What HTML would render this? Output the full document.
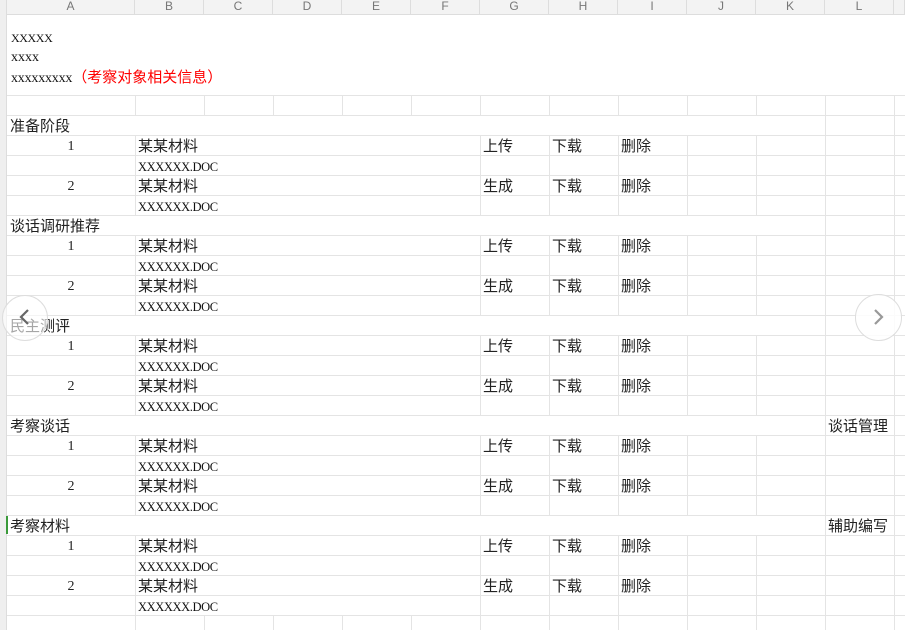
<!DOCTYPE html>
<html><head><meta charset="utf-8"><style>
*{margin:0;padding:0;box-sizing:border-box}
body{width:923px;height:630px;overflow:hidden;background:#fff;position:relative;font-family:"Liberation Sans","Noto Sans CJK SC",sans-serif;color:#222}
.a{position:absolute}
.hl{position:absolute;left:7px;width:898px;height:1px;background:#e4e4e4}
.vl{position:absolute;width:1px;background:#e4e4e4}
.hdr{position:absolute;top:0;height:15px;font-size:12px;color:#777;text-align:center;line-height:13px;border-right:1px solid #ddd}
.t{position:absolute;font-size:15px;line-height:20px;margin-top:1px;white-space:nowrap;font-family:"Noto Sans CJK SC",sans-serif;color:#222}
.s{position:absolute;font-size:12.5px;line-height:20px;margin-top:1px;white-space:nowrap;font-family:"Liberation Serif","Noto Serif CJK SC",serif;color:#111;letter-spacing:-0.4px}
.n{position:absolute;left:7px;width:128px;margin-top:2px;text-align:center;font-size:14px;line-height:20px;font-family:"Liberation Serif",serif}
</style></head><body>
<div class="a" style="left:0;top:0;width:923px;height:15px;background:#f3f3f3;border-bottom:1px solid #ddd"></div>
<div class="a" style="left:0;top:0;width:7px;height:630px;background:#efefef;border-right:1px solid #ddd"></div>
<div class="a" style="left:905px;top:0;width:18px;height:630px;background:#fff"></div>
<div class="hdr" style="left:7px;width:128px">A</div>
<div class="hdr" style="left:135px;width:69px">B</div>
<div class="hdr" style="left:204px;width:69px">C</div>
<div class="hdr" style="left:273px;width:69px">D</div>
<div class="hdr" style="left:342px;width:69px">E</div>
<div class="hdr" style="left:411px;width:69px">F</div>
<div class="hdr" style="left:480px;width:69px">G</div>
<div class="hdr" style="left:549px;width:69px">H</div>
<div class="hdr" style="left:618px;width:69px">I</div>
<div class="hdr" style="left:687px;width:69px">J</div>
<div class="hdr" style="left:756px;width:69px">K</div>
<div class="hdr" style="left:825px;width:69px">L</div>
<div class="hdr" style="left:894px;width:11px"></div>

<div class="s" style="left:11px;top:27px;font-size:12px">XXXXX</div>
<div class="s" style="left:11px;top:47px;font-size:14px;letter-spacing:0">xxxx</div>
<div class="s" style="left:11px;top:66px;font-size:14px;letter-spacing:-0.2px">xxxxxxxxx<span style="color:#f00;font-family:'Noto Sans CJK SC',sans-serif;font-size:15px;letter-spacing:0">（考察对象相关信息）</span></div>

<div class="hl" style="top:95px"></div>
<div class="hl" style="top:115px"></div>
<div class="hl" style="top:135px"></div><div class="hl" style="top:155px"></div><div class="hl" style="top:175px"></div><div class="hl" style="top:195px"></div><div class="hl" style="top:215px"></div>
<div class="hl" style="top:235px"></div><div class="hl" style="top:255px"></div><div class="hl" style="top:275px"></div><div class="hl" style="top:295px"></div><div class="hl" style="top:315px"></div>
<div class="hl" style="top:335px"></div><div class="hl" style="top:355px"></div><div class="hl" style="top:375px"></div><div class="hl" style="top:395px"></div><div class="hl" style="top:415px"></div>
<div class="hl" style="top:435px"></div><div class="hl" style="top:455px"></div><div class="hl" style="top:475px"></div><div class="hl" style="top:495px"></div><div class="hl" style="top:515px"></div>
<div class="hl" style="top:535px"></div><div class="hl" style="top:555px"></div><div class="hl" style="top:575px"></div><div class="hl" style="top:595px"></div><div class="hl" style="top:615px"></div>

<div class="vl" style="left:135px;top:95px;height:20px"></div><div class="vl" style="left:204px;top:95px;height:20px"></div><div class="vl" style="left:273px;top:95px;height:20px"></div><div class="vl" style="left:342px;top:95px;height:20px"></div><div class="vl" style="left:411px;top:95px;height:20px"></div><div class="vl" style="left:480px;top:95px;height:20px"></div><div class="vl" style="left:549px;top:95px;height:20px"></div><div class="vl" style="left:618px;top:95px;height:20px"></div><div class="vl" style="left:687px;top:95px;height:20px"></div><div class="vl" style="left:756px;top:95px;height:20px"></div>
<div class="vl" style="left:825px;top:95px;height:535px"></div>
<div class="vl" style="left:894px;top:95px;height:535px"></div>
<div class="vl" style="left:135px;top:135px;height:80px"></div><div class="vl" style="left:480px;top:135px;height:80px"></div><div class="vl" style="left:549px;top:135px;height:80px"></div><div class="vl" style="left:618px;top:135px;height:80px"></div><div class="vl" style="left:687px;top:135px;height:80px"></div><div class="vl" style="left:756px;top:135px;height:80px"></div>
<div class="vl" style="left:135px;top:235px;height:80px"></div><div class="vl" style="left:480px;top:235px;height:80px"></div><div class="vl" style="left:549px;top:235px;height:80px"></div><div class="vl" style="left:618px;top:235px;height:80px"></div><div class="vl" style="left:687px;top:235px;height:80px"></div><div class="vl" style="left:756px;top:235px;height:80px"></div>
<div class="vl" style="left:135px;top:335px;height:80px"></div><div class="vl" style="left:480px;top:335px;height:80px"></div><div class="vl" style="left:549px;top:335px;height:80px"></div><div class="vl" style="left:618px;top:335px;height:80px"></div><div class="vl" style="left:687px;top:335px;height:80px"></div><div class="vl" style="left:756px;top:335px;height:80px"></div>
<div class="vl" style="left:135px;top:435px;height:80px"></div><div class="vl" style="left:480px;top:435px;height:80px"></div><div class="vl" style="left:549px;top:435px;height:80px"></div><div class="vl" style="left:618px;top:435px;height:80px"></div><div class="vl" style="left:687px;top:435px;height:80px"></div><div class="vl" style="left:756px;top:435px;height:80px"></div>
<div class="vl" style="left:135px;top:535px;height:95px"></div><div class="vl" style="left:480px;top:535px;height:80px"></div><div class="vl" style="left:549px;top:535px;height:80px"></div><div class="vl" style="left:618px;top:535px;height:80px"></div><div class="vl" style="left:687px;top:535px;height:80px"></div><div class="vl" style="left:756px;top:535px;height:80px"></div>
<div class="vl" style="left:204px;top:615px;height:15px"></div><div class="vl" style="left:273px;top:615px;height:15px"></div><div class="vl" style="left:342px;top:615px;height:15px"></div><div class="vl" style="left:411px;top:615px;height:15px"></div><div class="vl" style="left:480px;top:615px;height:15px"></div><div class="vl" style="left:549px;top:615px;height:15px"></div><div class="vl" style="left:618px;top:615px;height:15px"></div><div class="vl" style="left:687px;top:615px;height:15px"></div><div class="vl" style="left:756px;top:615px;height:15px"></div>

<div class="t" style="left:10px;top:115px">准备阶段</div>
<div class="t" style="left:10px;top:215px">谈话调研推荐</div>
<div class="t" style="left:10px;top:315px">民主测评</div>
<div class="t" style="left:10px;top:415px">考察谈话</div>
<div class="t" style="left:10px;top:515px">考察材料</div>
<div class="a" style="left:6px;top:516px;width:2px;height:18px;background:#3a9a3a"></div>
<div class="t" style="left:828px;top:415px">谈话管理</div>
<div class="t" style="left:828px;top:515px">辅助编写</div>

<div class="n" style="top:135px">1</div><div class="n" style="top:175px">2</div>
<div class="n" style="top:235px">1</div><div class="n" style="top:275px">2</div>
<div class="n" style="top:335px">1</div><div class="n" style="top:375px">2</div>
<div class="n" style="top:435px">1</div><div class="n" style="top:475px">2</div>
<div class="n" style="top:535px">1</div><div class="n" style="top:575px">2</div>

<div class="t" style="left:138px;top:135px">某某材料</div><div class="s" style="left:138px;top:156px">XXXXXX.DOC</div>
<div class="t" style="left:138px;top:175px">某某材料</div><div class="s" style="left:138px;top:196px">XXXXXX.DOC</div>
<div class="t" style="left:138px;top:235px">某某材料</div><div class="s" style="left:138px;top:256px">XXXXXX.DOC</div>
<div class="t" style="left:138px;top:275px">某某材料</div><div class="s" style="left:138px;top:296px">XXXXXX.DOC</div>
<div class="t" style="left:138px;top:335px">某某材料</div><div class="s" style="left:138px;top:356px">XXXXXX.DOC</div>
<div class="t" style="left:138px;top:375px">某某材料</div><div class="s" style="left:138px;top:396px">XXXXXX.DOC</div>
<div class="t" style="left:138px;top:435px">某某材料</div><div class="s" style="left:138px;top:456px">XXXXXX.DOC</div>
<div class="t" style="left:138px;top:475px">某某材料</div><div class="s" style="left:138px;top:496px">XXXXXX.DOC</div>
<div class="t" style="left:138px;top:535px">某某材料</div><div class="s" style="left:138px;top:556px">XXXXXX.DOC</div>
<div class="t" style="left:138px;top:575px">某某材料</div><div class="s" style="left:138px;top:596px">XXXXXX.DOC</div>

<div class="t" style="left:483px;top:135px">上传</div><div class="t" style="left:552px;top:135px">下载</div><div class="t" style="left:621px;top:135px">删除</div>
<div class="t" style="left:483px;top:175px">生成</div><div class="t" style="left:552px;top:175px">下载</div><div class="t" style="left:621px;top:175px">删除</div>
<div class="t" style="left:483px;top:235px">上传</div><div class="t" style="left:552px;top:235px">下载</div><div class="t" style="left:621px;top:235px">删除</div>
<div class="t" style="left:483px;top:275px">生成</div><div class="t" style="left:552px;top:275px">下载</div><div class="t" style="left:621px;top:275px">删除</div>
<div class="t" style="left:483px;top:335px">上传</div><div class="t" style="left:552px;top:335px">下载</div><div class="t" style="left:621px;top:335px">删除</div>
<div class="t" style="left:483px;top:375px">生成</div><div class="t" style="left:552px;top:375px">下载</div><div class="t" style="left:621px;top:375px">删除</div>
<div class="t" style="left:483px;top:435px">上传</div><div class="t" style="left:552px;top:435px">下载</div><div class="t" style="left:621px;top:435px">删除</div>
<div class="t" style="left:483px;top:475px">生成</div><div class="t" style="left:552px;top:475px">下载</div><div class="t" style="left:621px;top:475px">删除</div>
<div class="t" style="left:483px;top:535px">上传</div><div class="t" style="left:552px;top:535px">下载</div><div class="t" style="left:621px;top:535px">删除</div>
<div class="t" style="left:483px;top:575px">生成</div><div class="t" style="left:552px;top:575px">下载</div><div class="t" style="left:621px;top:575px">删除</div>

<div class="a" style="left:2px;top:295px;width:46px;height:46px;border-radius:50%;border:1px solid #ddd;background:rgba(255,255,255,0.6)"></div>
<svg class="a" style="left:14px;top:305px" width="20" height="24"><path d="M14 5 L7 12 L14 19" stroke="#666" stroke-width="2.2" fill="none"/></svg>
<div class="a" style="left:855px;top:294px;width:47px;height:47px;border-radius:50%;border:1px solid #ddd;background:rgba(255,255,255,0.85)"></div>
<svg class="a" style="left:868px;top:305px" width="20" height="24"><path d="M7 5 L14 12 L7 19" stroke="#999" stroke-width="2.2" fill="none"/></svg>
</body></html>
